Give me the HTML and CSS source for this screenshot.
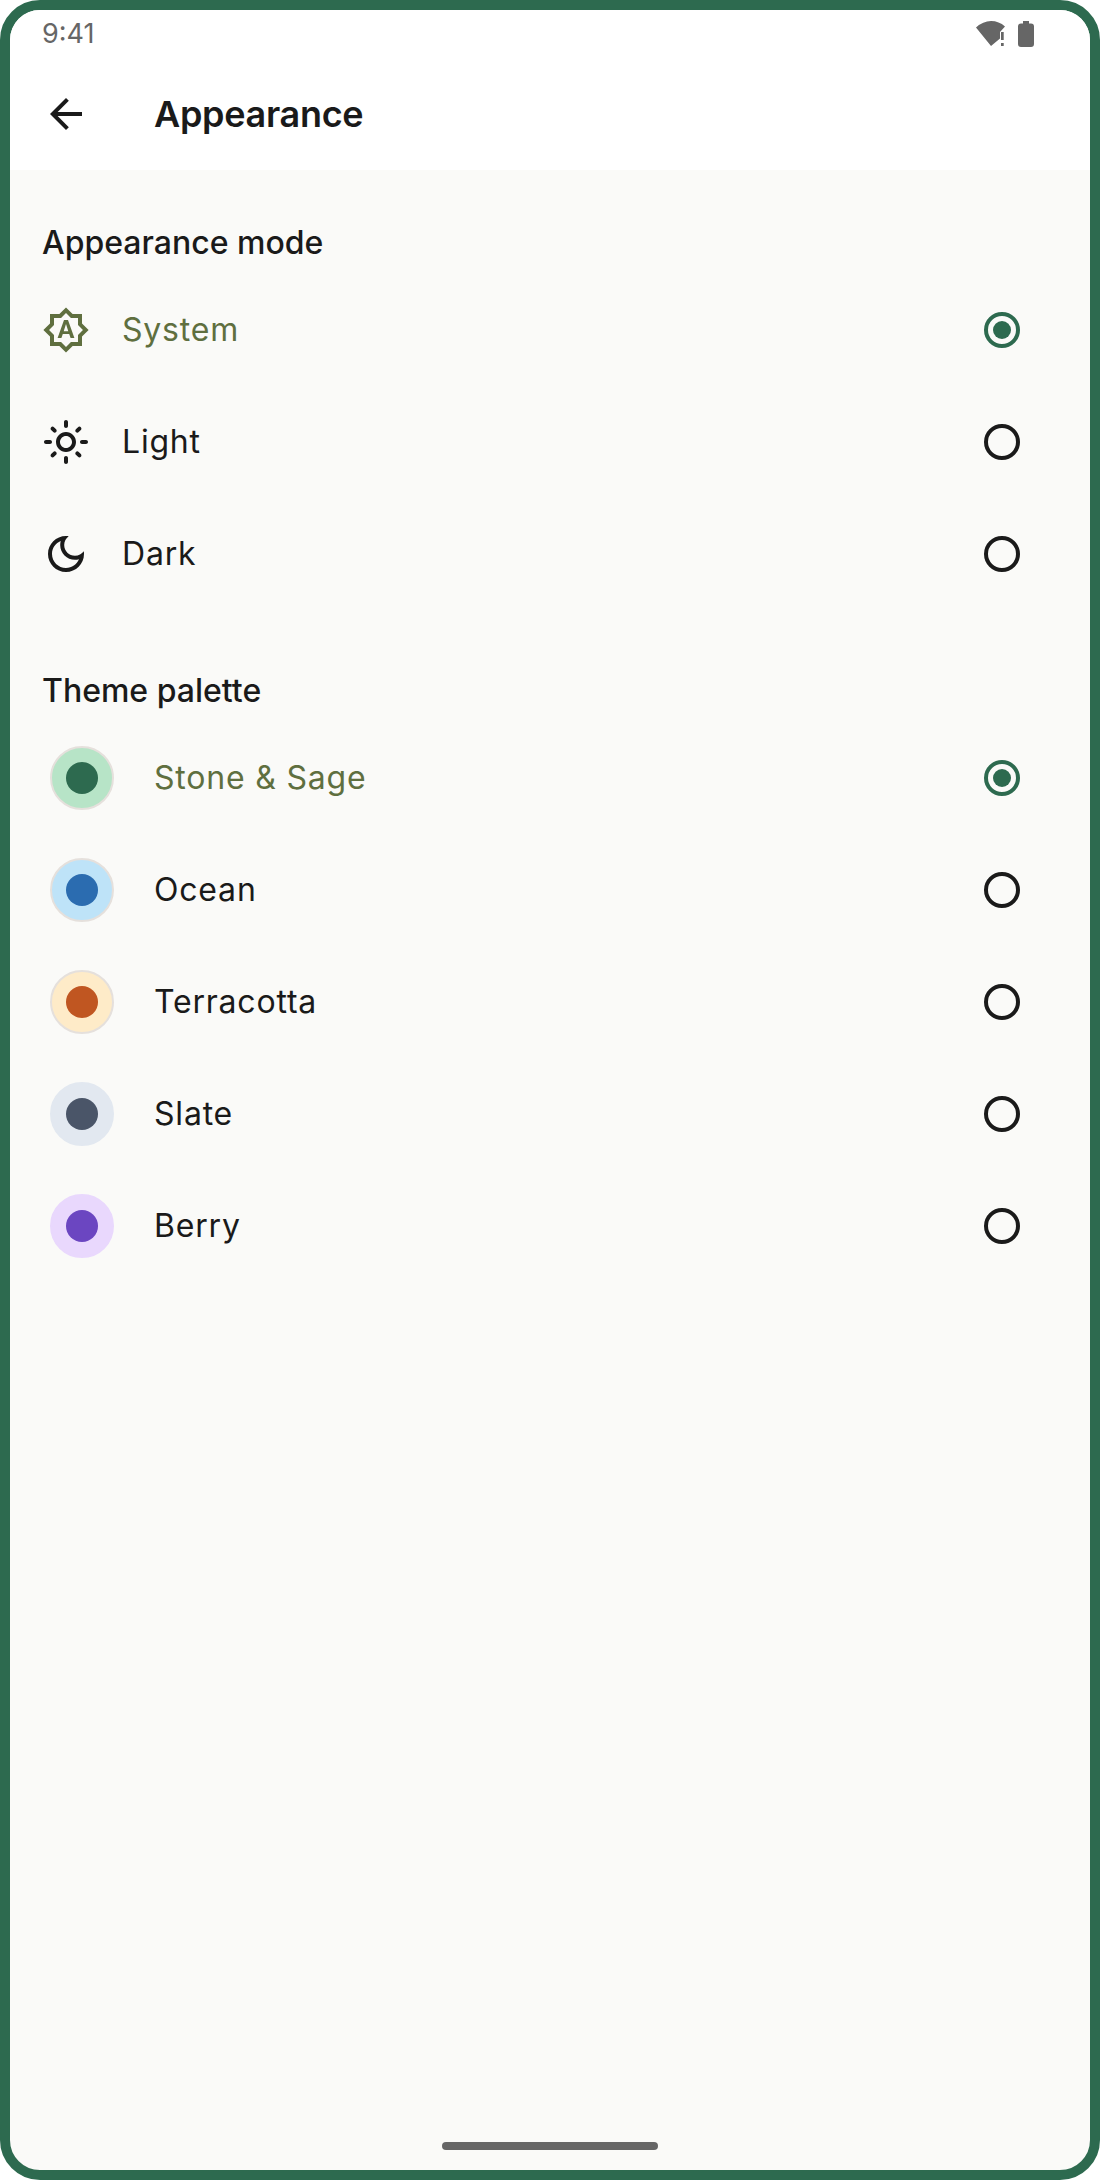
FILE: index.html
```html
<!DOCTYPE html>
<html lang="en">
<head>
<meta charset="utf-8">
<title>Appearance</title>
<link rel="stylesheet" href="styles.css">
</head>
<body>
<div class="device">
  <header class="top">
    <div class="status">
      <span class="time">9:41</span>
      <div class="status-icons">
        <svg class="wifi" viewBox="0 0 32 28" width="32" height="28"><path d="M2 7.500Q9 1 17 1Q25 1 31 6.500L26 12V18.500L17 26z"/><rect x="27" y="12" width="2.700" height="8"/><rect x="27" y="23" width="2.700" height="3"/></svg>
        <svg class="battery" viewBox="0 0 16 26" width="16" height="26"><path d="M5 0h6v2.500h2A3 3 0 0 1 16 5.500V23a3 3 0 0 1-3 3H3a3 3 0 0 1-3-3V5.500A3 3 0 0 1 3 2.500h2z"/></svg>
      </div>
    </div>
    <div class="appbar">
      <svg class="icon" viewBox="0 0 24 24"><path d="M20 11H7.830l5.590-5.590L12 4l-8 8 8 8 1.410-1.410L7.830 13H20v-2z"/></svg>
      <h1 class="title">Appearance</h1>
    </div>
  </header>
  <main class="content">
    <section class="section">
      <h2 class="heading">Appearance mode</h2>
      <div class="row selected">
        <svg class="icon" viewBox="0 0 24 24"><path d="M20 8.690V4h-4.690L12 .69 8.690 4H4v4.690L.69 12 4 15.310V20h4.690L12 23.310 15.310 20H20v-4.690L23.310 12 20 8.690zm-2 5.790V18h-3.520L12 20.480 9.520 18H6v-3.520L3.520 12 6 9.520V6h3.520L12 3.520 14.480 6H18v3.520L20.480 12 18 14.480z"/><path d="M11 7l-3.200 9h1.900l.7-2h3.200l.7 2h1.900L13 7h-2zm-.15 5.650L12 9l1.150 3.650h-2.300z"/></svg>
        <span class="label">System</span>
        <span class="radio on"></span>
      </div>
      <div class="row">
        <svg class="icon" viewBox="0 0 24 24"><path d="M12 9c1.650 0 3 1.350 3 3s-1.350 3-3 3-3-1.350-3-3 1.350-3 3-3m0-2c-2.760 0-5 2.240-5 5s2.240 5 5 5 5-2.240 5-5-2.240-5-5-5zM2 13h2c.55 0 1-.45 1-1s-.45-1-1-1H2c-.55 0-1 .45-1 1s.45 1 1 1zm18 0h2c.55 0 1-.45 1-1s-.45-1-1-1h-2c-.55 0-1 .45-1 1s.45 1 1 1zM11 2v2c0 .55.45 1 1 1s1-.45 1-1V2c0-.55-.45-1-1-1s-1 .45-1 1zm0 18v2c0 .55.45 1 1 1s1-.45 1-1v-2c0-.55-.45-1-1-1s-1 .45-1 1zM5.990 4.580c-.39-.39-1.030-.39-1.410 0-.39.39-.39 1.030 0 1.410l1.060 1.060c.39.39 1.030.39 1.410 0s.39-1.030 0-1.410L5.990 4.580zm12.370 12.370c-.39-.39-1.030-.39-1.410 0-.39.39-.39 1.030 0 1.410l1.060 1.060c.39.39 1.030.39 1.410 0 .39-.39.39-1.030 0-1.410l-1.060-1.060zm1.060-10.960c.39-.39.39-1.030 0-1.410-.39-.39-1.030-.39-1.410 0l-1.060 1.060c-.39.39-.39 1.030 0 1.410s1.030.39 1.410 0l1.060-1.060zM7.050 18.360c.39-.39.39-1.030 0-1.410-.39-.39-1.030-.39-1.410 0l-1.060 1.060c-.39.39-.39 1.030 0 1.410s1.030.39 1.410 0l1.060-1.060z"/></svg>
        <span class="label">Light</span>
        <span class="radio"></span>
      </div>
      <div class="row">
        <svg class="icon" viewBox="0 0 24 24"><path d="M9.370 5.510C9.190 6.150 9.100 6.820 9.100 7.500c0 4.080 3.320 7.400 7.400 7.400.68 0 1.350-.09 1.990-.27C17.450 17.190 14.930 19 12 19c-3.860 0-7-3.140-7-7 0-2.930 1.810-5.450 4.370-6.490zM12 3c-4.970 0-9 4.030-9 9s4.030 9 9 9 9-4.030 9-9c0-.46-.04-.92-.1-1.360-.98 1.370-2.580 2.260-4.400 2.260-2.980 0-5.400-2.420-5.400-5.400 0-1.810.89-3.420 2.260-4.400C12.920 3.040 12.460 3 12 3z"/></svg>
        <span class="label">Dark</span>
        <span class="radio"></span>
      </div>
    </section>
    <section class="section">
      <h2 class="heading">Theme palette</h2>
      <div class="row palette selected">
        <span class="swatch stone"><span class="dot"></span></span>
        <span class="label">Stone &amp; Sage</span>
        <span class="radio on"></span>
      </div>
      <div class="row palette">
        <span class="swatch ocean"><span class="dot"></span></span>
        <span class="label">Ocean</span>
        <span class="radio"></span>
      </div>
      <div class="row palette">
        <span class="swatch terracotta"><span class="dot"></span></span>
        <span class="label">Terracotta</span>
        <span class="radio"></span>
      </div>
      <div class="row palette">
        <span class="swatch slate"><span class="dot"></span></span>
        <span class="label">Slate</span>
        <span class="radio"></span>
      </div>
      <div class="row palette">
        <span class="swatch berry"><span class="dot"></span></span>
        <span class="label">Berry</span>
        <span class="radio"></span>
      </div>
    </section>
    <div class="home-bar"></div>
  </main>
</div>
</body>
</html>
```
FILE: styles.css
```css
* { box-sizing: border-box; }
html, body { margin: 0; padding: 0; background: #fff; }
body { font-family: Inter, "Liberation Sans", sans-serif; color: #1a1a1a; }
.device {
  width: 1100px;
  height: 2180px;
  border: 10px solid #2d6a4f;
  border-radius: 40px;
  overflow: hidden;
  display: flex;
  flex-direction: column;
  background: #fafaf8;
}
.top { background: #fff; flex: none; }
.status {
  height: 48px;
  display: flex;
  align-items: center;
  justify-content: space-between;
  padding: 0 56px 0 32px;
}
.time { font-size: 27px; line-height: 48px; color: #666; font-weight: 380; }
.status-icons { display: flex; align-items: center; gap: 12px; }
.wifi, .battery { fill: #666; display: block; }
.appbar { height: 112px; display: flex; align-items: center; padding-left: 32px; }
.title { margin: 0 0 0 64px; font-size: 36px; line-height: 48px; font-weight: 600; letter-spacing: -0.3px; }
.icon { width: 48px; height: 48px; fill: currentColor; flex: none; display: block; }
.content { flex: 1; display: flex; flex-direction: column; }
.section + .section { margin-top: 8px; }
.heading { margin: 0; padding: 51px 32px 9px; font-size: 32px; line-height: 44px; font-weight: 500; }
.row { height: 112px; display: flex; align-items: center; padding: 0 68px 0 32px; gap: 32px; }
.row.palette { padding-left: 40px; gap: 40px; }
.label { flex: 1; font-size: 32px; line-height: 48px; letter-spacing: 0.8px; font-weight: 380; }
.selected { color: #5f6f3f; }
.radio { width: 36px; height: 36px; border: 4px solid #1a1a1a; border-radius: 50%; flex: none; margin-right: 2px; display: flex; align-items: center; justify-content: center; }
.radio.on { border-color: #2d6a4f; }
.radio.on::after { content: ""; width: 18px; height: 18px; border-radius: 50%; background: #2d6a4f; }
.swatch { width: 64px; height: 64px; border-radius: 50%; border: 2px solid #e5e0dc; flex: none; display: flex; align-items: center; justify-content: center; }
.dot { width: 32px; height: 32px; border-radius: 50%; }
.stone { background: #b7e4c7; } .stone .dot { background: #2d6a4f; }
.ocean { background: #bee3f8; } .ocean .dot { background: #2b6cb0; }
.terracotta { background: #feebc8; } .terracotta .dot { background: #c05621; }
.slate { background: #e2e8f0; border-color: #e2e8f0; } .slate .dot { background: #4a5568; }
.berry { background: #e9d8fd; border-color: #e9d8fd; } .berry .dot { background: #6b46c1; }
.home-bar { width: 216px; height: 8px; border-radius: 4px; background: #666; margin: auto auto 20px; }
```
